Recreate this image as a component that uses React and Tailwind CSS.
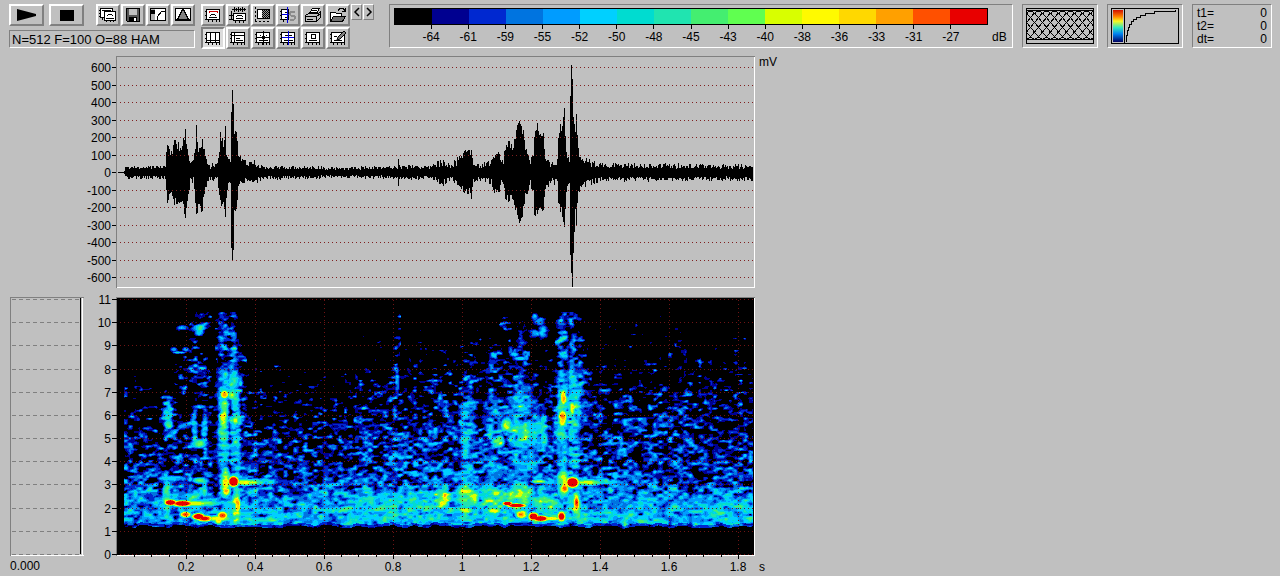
import React from 'react';

const SCALE = [
  '#000000', '#000090', '#0028d0', '#0074e0', '#009cff', '#00d0ff', '#00dcd0', '#20e4b0',
  '#44ee70', '#60ff50', '#d8ff00', '#fffa00', '#ffd800', '#ffa000', '#ff5000', '#e80000',
];
const DB = [-64, -61, -59, -55, -52, -50, -48, -45, -43, -40, -38, -36, -33, -31, -27];

// ---------- signal data ----------

function hash(x, y) {
  let h = Math.imul(x, 374761393) + Math.imul(y, 668265263);
  h = Math.imul(h ^ (h >>> 13), 1274126177);
  return ((h ^ (h >>> 16)) >>> 0) / 4294967295;
}

function noise(x, y, w, h, seed) {
  const gx = x / w;
  const gy = y / h;
  const ix = Math.floor(gx);
  const iy = Math.floor(gy);
  const fx = gx - ix;
  const fy = gy - iy;
  const sx = fx * fx * (3 - 2 * fx);
  const sy = fy * fy * (3 - 2 * fy);
  const a = hash(ix + seed, iy);
  const b = hash(ix + 1 + seed, iy);
  const c = hash(ix + seed, iy + 1);
  const d = hash(ix + 1 + seed, iy + 1);
  return (a + (b - a) * sx) * (1 - sy) + (c + (d - c) * sx) * sy;
}

// amplitude envelope: x, up, down
const ENVELOPE = [
  [124, 1, 1], [125, 5, 5], [150, 5, 5], [165, 5, 5], [166, 20, 18], [167, 30, 34], [170, 20, 22], [172, 22, 22],
  [174, 34, 30], [177, 28, 32], [180, 24, 28], [183, 34, 34], [185, 42, 41], [188, 18, 25], [190, 8, 8], [193, 12, 8],
  [195, 26, 30], [196, 47, 41], [198, 24, 30], [202, 33, 36], [205, 16, 18], [209, 6, 6], [217, 8, 6], [219, 25, 20],
  [220, 36, 32], [223, 28, 28], [225, 46, 44], [226, 18, 30], [228, 15, 10], [230, 10, 10], [231, 60, 75], [232, 82, 87],
  [233, 68, 77], [234, 35, 46], [236, 40, 38], [238, 16, 12], [241, 10, 8], [254, 9, 10], [262, 5, 5], [285, 5, 5],
  [340, 4, 4], [397, 5, 5], [398, 14, 12], [399, 6, 6], [430, 5, 5], [443, 11, 10], [450, 5, 5], [460, 15, 14],
  [465, 20, 20], [470, 20, 18], [471, 24, 26], [473, 8, 8], [480, 6, 6], [490, 10, 10], [494, 18, 18], [499, 20, 20], [501, 8, 8],
  [503, 10, 10], [505, 28, 24], [513, 28, 28], [515, 30, 36], [517, 47, 42], [519, 51, 50], [522, 43, 43], [525, 28, 24],
  [528, 17, 16], [530, 12, 12], [533, 16, 18], [534, 44, 38], [541, 42, 38], [543, 38, 34], [545, 15, 14], [550, 8, 8],
  [557, 10, 10], [558, 42, 34], [562, 46, 44], [564, 64, 54], [566, 20, 20], [569, 12, 8], [570, 76, 82], [571, 107, 100],
  [572, 93, 114], [573, 55, 80], [575, 40, 38], [576, 58, 52], [578, 24, 20], [580, 13, 14], [600, 7, 7], [753, 6, 6],
];

function buildWave() {
  let d = '';
  let k = 0;
  for (let x = 124; x <= 752; x++) {
    while (k < ENVELOPE.length - 2 && ENVELOPE[k + 1][0] <= x) k++;
    const p = ENVELOPE[k];
    const q = ENVELOPE[k + 1];
    const t = (x - p[0]) / (q[0] - p[0]);
    const up = p[1] + (q[1] - p[1]) * t;
    const down = p[2] + (q[2] - p[2]) * t;
    const jitter = up > 45 ? 0 : up > 12 ? 0.35 : 0.8;
    const u = Math.round(up * (1 + (hash(x, 1) - 0.6) * jitter));
    const v = Math.round(down * (1 + (hash(x, 2) - 0.6) * jitter));
    d += `M${x} ${172 - u}h1v${u + v + 1}h-1z`;
  }
  return d;
}

// background level at each kHz, for the three stretches of the recording
const FREQS = [1.25, 2, 2.5, 3, 4, 5, 6, 7, 8, 9, 11];
const FLOOR = [
  [4.5, 4.5, 3.7, 2.8, 1.5, 1, 0.1, -1.2, -2.7, -4.6, -9],
  [5, 5.1, 4.6, 3.4, 2.2, 1.9, 1.1, -0.1, -1.1, -2.3, -6.5],
  [5, 5, 4.2, 3, 1.9, 1.8, 1.1, 0.1, -1, -2.1, -5],
];

function floorLevel(x, f) {
  const row = FLOOR[x < 355 ? 0 : x < 580 ? 1 : 2];
  let i = 0;
  while (i < FREQS.length - 2 && FREQS[i + 1] < f) i++;
  const t = (f - FREQS[i]) / (FREQS[i + 1] - FREQS[i]);
  return row[i] + (row[i + 1] - row[i]) * t;
}

// calls: x, y, half width, half height, level, roughness
const CALLS = [
  // first phrase
  [167, 412, 4, 14, 5.6, 8], [170, 440, 6, 18, 3, 8], [168, 424, 4, 4, 9, 3], [166, 500, 4, 24, 8.6, 7],
  [172, 478, 14, 3, 6, 6], [185, 425, 12, 3, 4, 6], [190, 502, 28, 14, 5.8, 7],
  [170, 502, 6, 3, 18, 0], [182, 503, 10, 3, 18, 0], [195, 503, 14, 3, 11, 1], [209, 503, 12, 3, 8, 3],
  [185, 514, 5, 3, 15, 0], [198, 516, 6, 3, 19, 0], [204, 518, 8, 3, 16, 0], [218, 518, 12, 3, 11.5, 1],
  [222, 515, 5, 4, 15, 0], [218, 520, 4, 4, 12, 1], [200, 480, 7, 3, 8.5, 3],
  [194, 428, 3, 15, 6, 6], [204, 430, 3, 16, 6, 6], [199, 443, 7, 4, 8.5, 3], [199, 406, 6, 2, 4.5, 4],
  [199, 327, 7, 4, 6, 6], [199, 332, 4, 3, 6.5, 3], [198, 366, 7, 8, 2.8, 9], [202, 388, 5, 12, 1, 9], [203, 317, 5, 5, 1.4, 9],
  [194, 345, 4, 6, 1, 9], [184, 375, 6, 18, 0, 9], [204, 492, 3, 14, 6, 5],
  [173, 349, 3, 2, 4.5, 2], [177, 352, 4, 1, 6, 2], [181, 352, 4, 1, 6, 2], [185, 349, 3, 2, 5, 2], [182, 327, 5, 2, 3.5, 4],
  [223, 335, 5, 24, 2.8, 9], [224, 400, 6, 30, 6.4, 7], [223, 450, 6, 50, 5.2, 7], [224, 394, 4, 4, 14, 3], [224, 406, 4, 8, 10, 5],
  [223, 418, 4, 9, 11.5, 5], [223, 434, 5, 10, 8, 5], [225, 483, 5, 15, 11, 5], [226, 491, 4, 4, 13, 2],
  [233, 345, 3, 34, 3.4, 9], [233, 382, 5, 18, 6.4, 6], [235, 420, 5, 40, 7, 7], [235, 460, 5, 40, 5.4, 7], [231, 395, 4, 4, 10, 4],
  [235, 420, 3, 5, 11, 3], [236, 508, 5, 20, 9, 7], [237, 504, 3, 9, 13.5, 3], [238, 402, 7, 34, 2.6, 8],
  [233, 481, 5, 5, 20, 0], [246, 482, 14, 3, 11, 3], [262, 481, 16, 3, 7, 5],
  // soft notes leading to the second phrase
  [397, 382, 2, 12, 3.6, 6], [397, 330, 2, 18, 0.6, 8], [366, 430, 8, 20, 2.2, 9],
  [467, 375, 7, 14, 1.8, 9], [467, 420, 8, 26, 4.8, 7], [467, 460, 8, 50, 4.7, 7], [465, 438, 6, 4, 7.5, 5],
  [495, 375, 9, 18, 1.6, 9], [494, 425, 10, 30, 4.2, 8], [497, 441, 7, 6, 8.5, 6], [494, 475, 9, 20, 4.8, 7],
  [506, 425, 5, 8, 8.5, 6], [508, 400, 8, 22, 3, 8],
  [521, 362, 5, 24, 2.8, 9], [521, 405, 11, 24, 5, 7], [523, 434, 17, 16, 7, 7], [523, 455, 15, 36, 4.6, 7],
  [543, 430, 4, 20, 6.4, 6], [537, 430, 10, 24, 4.6, 7], [505, 330, 4, 8, 0.8, 9],
  [442, 498, 9, 13, 9.2, 8], [467, 496, 12, 13, 9.6, 8], [496, 498, 20, 14, 8.4, 8], [521, 494, 14, 12, 9.6, 8],
  [466, 510, 7, 3, 12, 6], [467, 491, 9, 3, 11.5, 6], [495, 493, 7, 3, 11, 6], [494, 510, 7, 3, 11.5, 6], [545, 502, 20, 12, 7.4, 7],
  [514, 354, 4, 2, 5.5, 2], [520, 358, 6, 2, 6, 2], [526, 357, 2, 3, 5, 2], [510, 350, 2, 3, 4, 2],
  [507, 503, 5, 2, 18, 0], [516, 505, 9, 2, 19, 0], [521, 514, 6, 4, 14, 3],
  [533, 516, 5, 4, 18, 0], [540, 518, 8, 3, 18, 0], [551, 518, 10, 2, 12, 0],
  [542, 331, 4, 5, 6, 3], [535, 333, 5, 3, 5.5, 3], [534, 317, 3, 3, 4.5, 4], [540, 321, 5, 3, 4.5, 4], [538, 481, 7, 2, 11, 3],
  // second phrase
  [561, 516, 4, 5, 17, 0], [563, 345, 5, 36, 3, 9], [563, 400, 6, 30, 7.2, 7], [562, 450, 6, 50, 5, 7],
  [563, 397, 3, 8, 13, 4], [562, 417, 4, 8, 13.5, 4], [561, 434, 5, 8, 8.5, 5], [563, 483, 6, 16, 10.6, 5], [564, 488, 4, 5, 14, 2],
  [572, 345, 3, 34, 3.4, 9], [572, 388, 5, 20, 6.2, 7], [573, 410, 7, 30, 7, 7], [573, 460, 6, 48, 5.4, 7], [572, 408, 3, 7, 11.5, 5],
  [576, 508, 5, 20, 9, 7], [576, 503, 3, 8, 15, 2], [572, 482, 6, 5, 20, 0], [588, 482, 14, 3, 10.6, 3], [604, 481, 16, 3, 7, 5],
  [572, 318, 8, 4, 3, 7], [577, 400, 9, 40, 2.8, 8], [590, 519, 30, 3, 7, 5], [265, 519, 28, 3, 6.6, 5],
];

function levelAt(x, y) {
  const f = (554 - y) / 23.18;
  const edge = 1.2 + (noise(x, 7, 7, 9, 40) - 0.5) * 0.2;
  if (x < 124 || f < edge || f > 10.45) return 0;
  const raw = noise(x, y + x * 0.05, 5, 3, 0) * 0.68 + noise(x, y, 3, 2, 900) * 0.32 - 0.5;
  const n = raw * (1 + 3 * raw * raw);
  const m = noise(x, y, 40, 30, 300) - 0.5;
  let level = floorLevel(x, f) + m * 1.4 + n * (f < 2.6 ? 7 : 8.5);
  level = Math.min(level, f < 3 ? 8 : 5);
  for (const [cx, cy, w, h, amp, rough] of CALLS) {
    const dx = (x - cx) / w;
    const dy = (y - cy) / h;
    const d = dx * dx + dy * dy;
    if (d > 3) continue;
    const v = amp * Math.exp(-0.6 * Math.pow(d, 1.5)) + n * rough;
    if (v > level) level = v;
  }
  if (f < edge + 0.12) level *= 0.5;
  return Math.max(0, Math.min(15, Math.floor(level)));
}

function buildSpectrogram() {
  const paths = SCALE.map(() => '');
  for (let y = 299; y < 555; y++) {
    let start = 118;
    let current = levelAt(118, y);
    for (let x = 119; x <= 753; x++) {
      const level = x === 753 ? -1 : levelAt(x, y);
      if (level !== current) {
        if (current > 0) paths[current] += `M${start} ${y}h${x - start}v1h${start - x}z`;
        start = x;
        current = level;
      }
    }
  }
  return paths;
}

const WAVE = buildWave();
const SPECTRUM = buildSpectrogram();
const MV = [600, 500, 400, 300, 200, 100, 0, -100, -200, -300, -400, -500, -600];
const KHZ = [11, 10, 9, 8, 7, 6, 5, 4, 3, 2, 1, 0];
const SECONDS = ['0.2', '0.4', '0.6', '0.8', '1', '1.2', '1.4', '1.6', '1.8'];
const mvY = (v) => Math.round(172 - v * 0.175) + 0.5;
const khzY = (v) => Math.round(554 - v * 23.18) + 0.5;

// ---------- charts ----------

function Waveform() {
  return (
    <svg viewBox="84 50 700 240" className="block w-full max-w-[700px] text-[12px]" role="img" aria-label="Waveform">
      <g shapeRendering="crispEdges">
        <path d="M116.5 288V56.5H755" stroke="#808080" fill="none" />
        <path d="M117 287.5H754.5V57" stroke="#fff" fill="none" />
        <path d={WAVE} fill="#000" />
        {MV.map((v) => (
          <g key={v}>
            <path d={`M112 ${mvY(v)}h4`} stroke="#000" />
            {v !== 0 && <path d={`M120 ${mvY(v)}H753`} stroke="#802020" strokeDasharray="1 3" />}
          </g>
        ))}
        <path d="M118 172.5H125" stroke="#000" />
      </g>
      {MV.map((v) => (
        <text key={v} x="111" y={mvY(v) + 4.5} textAnchor="end">{v}</text>
      ))}
      <text x="759" y="66">mV</text>
    </svg>
  );
}

function Spectrogram() {
  return (
    <svg viewBox="84 290 700 286" className="block w-full max-w-[700px] text-[12px]" role="img" aria-label="Spectrogram">
      <g shapeRendering="crispEdges">
        <path d="M116.5 556V297.5H755" stroke="#808080" fill="none" />
        <path d="M117 555.5H754.5V298" stroke="#fff" fill="none" />
        <rect x="117" y="298" width="637" height="257" fill="#000" />
        {SPECTRUM.map((d, i) => d && <path key={i} d={d} fill={SCALE[i]} />)}
        {KHZ.map((v) => (
          <g key={v}>
            <path d={`M112 ${khzY(v)}h5`} stroke="#000" />
            <path d={`M120 ${khzY(v)}H753`} stroke="#701414" strokeDasharray="1 3" />
          </g>
        ))}
        {SECONDS.map((s, i) => (
          <g key={s}>
            <path d={`M${186.5 + i * 69} 300V554`} stroke="#701414" strokeDasharray="1 3" />
            <path d={`M${186.5 + i * 69} 555v4`} stroke="#000" />
          </g>
        ))}
        {Array.from({ length: 36 }, (_, i) => (
          <path key={i} d={`M${Math.round(134 + i * 17.25) + 0.5} 555v2`} stroke="#000" />
        ))}
      </g>
      {KHZ.map((v) => (
        <text key={v} x="111" y={khzY(v) + 4.5} textAnchor="end">{v}</text>
      ))}
      {SECONDS.map((s, i) => (
        <text key={s} x={186 + i * 69} y="571" textAnchor="middle">{s}</text>
      ))}
      <text x="759" y="571">s</text>
    </svg>
  );
}

function SpectrumSlice() {
  return (
    <div className="flex flex-col pt-[7px] pl-[10px]">
      <svg viewBox="0 0 74 259" className="block w-[74px] h-[259px]" shapeRendering="crispEdges" role="img" aria-label="Amplitude spectrum">
        <path d="M0.5 259V0.5H74" stroke="#808080" fill="none" />
        <path d="M1 258.5H73.5M72.5 1V258" stroke="#fff" fill="none" />
        <path d="M70.5 1V257" stroke="#000" />
        {KHZ.map((v) => (
          <path key={v} d={`M2 ${khzY(v) - 297}H70`} stroke="#808080" strokeDasharray="4 3" />
        ))}
      </svg>
      <output className="text-[12px] leading-[20px]">0.000</output>
    </div>
  );
}

// ---------- toolbar ----------

function ToolButton({ label, wide, pressed, children }) {
  return (
    <button
      type="button"
      aria-label={label}
      className={
        (wide ? 'w-[35px] ' : 'w-[24px] ') +
        'h-[22px] shrink-0 flex items-center justify-center border-2 ' +
        (pressed
          ? 'bg-[#dcdcdc] border-t-[#808080] border-l-[#808080] border-b-white border-r-white'
          : 'bg-[#c0c0c0] border-t-white border-l-white border-b-[#808080] border-r-[#808080]')
      }
    >
      {children}
    </button>
  );
}

function Icon({ children }) {
  return (
    <svg viewBox="0 0 18 16" width="18" height="16" fill="none" stroke="#000" shapeRendering="crispEdges" className="block shrink-0">
      {children}
    </svg>
  );
}

// small plot with axis ticks on the left and below
function Plot({ children }) {
  return (
    <Icon>
      <path d="M1 4.5h2M1 8.5h2M1 12.5h2M4.5 13v2M8.5 13v2M12.5 13v2M15.5 13v2" />
      <rect x="2.5" y="2.5" width="13" height="10" fill="#fff" />
      {children}
    </Icon>
  );
}

const FILE_TOOLS = [
  ['Copy window', (
    <Icon>
      <path d="M0 3.5h2M0 6.5h2M0 9.5h2" />
      <rect x="1.5" y="1.5" width="12" height="9" fill="#fff" />
      <rect x="5.5" y="4.5" width="11" height="9" fill="#fff" />
      <path d="M3 3.5h9M9 7.5h4M8 8.5h1M13 8.5h1M7 11.5h8M3.5 11v2M7.5 14v1M11.5 14v1M14.5 14v1" />
    </Icon>
  )],
  ['Save', (
    <Icon>
      <path d="M2.5 1.5h13v13h-12l-1-1z" fill="#555" />
      <rect x="5" y="2" width="8" height="6" fill="#c0c0c0" stroke="none" />
      <rect x="5" y="10" width="8" height="5" fill="#000" stroke="none" />
      <rect x="10" y="11" width="2" height="3" fill="#fff" stroke="none" />
    </Icon>
  )],
  ['Gray scale', (
    <Icon>
      <rect x="1.5" y="1.5" width="15" height="12" fill="#fff" />
      <rect x="2" y="2" width="4" height="11" fill="#b0b0b0" stroke="none" />
      <rect x="2" y="3" width="4" height="4" fill="#000" stroke="none" />
      <path d="M8.5 13v-3l1-2 2-2 1-2h4" />
    </Icon>
  )],
  ['Window function', (
    <Icon>
      <rect x="1.5" y="1.5" width="15" height="12" fill="#fff" />
      <path d="M2 12.5l2-1 2-4 2-4 1-1 1 1 2 4 2 4 2 1z" fill="#808080" />
    </Icon>
  )],
];

const VIEW_TOOLS = [
  ['Spectrogram', (
    <Plot>
      <path d="M5 5.5V4.5H13V5.5" stroke="#d00000" />
      <path d="M7 7.5h4M6 8.5h1M11 8.5h1M5 10.5h8" />
    </Plot>
  )],
  ['Waveform and spectrogram', (
    <Icon>
      <path d="M3 2.5h14M5.5 0v5M7.5 1v3M9.5 0v5M11.5 1v3M13.5 0v5M15.5 1v3M0 8.5h4M0 12.5h4M2.5 4v9M6.5 14v2M10.5 14v2M14.5 14v2" />
      <rect x="4.5" y="6.5" width="12" height="7" fill="#fff" />
      <path d="M8 8.5h5M7 9.5h1M13 9.5h1M7 11.5h7" />
    </Icon>
  )],
  ['Select area', (
    <Icon>
      <path d="M1.5 0v15M1 14.5h16" strokeDasharray="2 2" />
      <rect x="3.5" y="2.5" width="12" height="9" fill="#fff" />
      <rect x="8" y="3" width="7" height="8" fill="#999" stroke="none" />
      <path d="M8.5 3v8M10.5 3v8M12.5 3v8M14.5 3v8" strokeDasharray="1 1" />
      <path d="M9.5 4v7M11.5 4v7M13.5 4v7" strokeDasharray="1 1" />
    </Icon>
  )],
  ['Spectrum cursor', (
    <Icon>
      <rect x="2.5" y="2.5" width="7" height="10" fill="#fff" />
      <path d="M1 4.5h2M1 8.5h2M1 12.5h2M4.5 13v2M6 5.5h3M6 10.5h3" />
      <path d="M8.5 0v16M3 7.5h7" stroke="#0000e0" />
      <path d="M16 4.5h-4l-1 1v2l1 1h3l1 1v2l-1 1h-4" stroke="#8a8a8a" strokeWidth="2" />
    </Icon>
  )],
  ['Print', (
    <Icon>
      <path d="M5.5 6.5l3-5h7l-3 5z" fill="#fff" />
      <path d="M1.5 8.5l3-2h10l2-2v6l-4 4h-11z" fill="#c0c0c0" />
      <path d="M1.5 9.5h11v5M12.5 9.5l4-3M3 12.5h6M8 3.5h5M7 5.5h5" />
    </Icon>
  )],
  ['Open', (
    <Icon>
      <path d="M1.5 13.5v-8h5l1 1h5v3" fill="#fff" />
      <path d="M1.5 14.5l3-5h12l-3 5z" fill="#707070" />
      <path d="M9 3.5l2-2h3l2 2M16.5 1v4M13 4.5h4" />
    </Icon>
  )],
];

const GRID_TOOLS = [
  ['Time markers', <Plot><path d="M6.5 3v10M11.5 3v10M3 10.5h12" /></Plot>],
  ['Frequency markers', <Plot><path d="M3 5.5h12M5.5 3v10M7 8.5h4M7 10.5h7" /></Plot>],
  ['Cross hair', <Plot><path d="M9.5 1v14M3 7.5h12M6 5.5h1M12 5.5h1M8 6.5h3M8 8.5h3M5 10.5h9" /></Plot>],
  ['Cross hair with harmonics', (
    <Plot>
      <path d="M6 5.5h7M5 10.5h9" />
      <path d="M9.5 1v14M3 7.5h12" stroke="#0000e0" />
    </Plot>
  )],
  ['Box cursor', <Plot><rect x="7.5" y="4.5" width="4" height="4" /><path d="M5 10.5h8" /></Plot>],
  ['Annotate', (
    <Plot>
      <path d="M8 10l1-3 6-6 2 2-6 6z" fill="#808080" shapeRendering="auto" />
      <path d="M5 6.5h3M5 10.5h8" />
    </Plot>
  )],
];

function Toolbar() {
  return (
    <div className="flex shrink-0 gap-[6px]">
      <div className="flex flex-col gap-[4px]">
        <div className="flex items-start gap-[12px]">
          <div className="flex gap-[5px]">
            <ToolButton label="Play" wide>
              <svg viewBox="0 0 19 12" className="w-[19px] h-[12px]"><path d="M0 0L19 5v2L0 12z" /></svg>
            </ToolButton>
            <ToolButton label="Stop" wide>
              <span className="w-[14px] h-[11px] bg-black" />
            </ToolButton>
          </div>
          <div className="flex gap-px">
            {FILE_TOOLS.map(([label, icon]) => <ToolButton key={label} label={label}>{icon}</ToolButton>)}
          </div>
        </div>
        <input
          readOnly
          aria-label="Analysis settings"
          value="N=512 F=100 O=88 HAM"
          className="w-full h-[18px] px-[2px] text-[13px] leading-[16px] bg-[#c0c0c0] border border-t-[#808080] border-l-[#808080] border-b-white border-r-white rounded-none outline-none"
        />
      </div>
      <div className="flex flex-col gap-px">
        <div className="flex items-start gap-px">
          {VIEW_TOOLS.map(([label, icon]) => <ToolButton key={label} label={label}>{icon}</ToolButton>)}
          {['M6 1L2 5l4 4', 'M2 1l4 4-4 4'].map((d, i) => (
            <button
              key={d}
              type="button"
              aria-label={i ? 'Next' : 'Previous'}
              className="w-[11px] h-[16px] flex items-center justify-center border border-t-white border-l-white border-b-[#808080] border-r-[#808080]"
            >
              <svg viewBox="0 0 8 10" className="w-[8px] h-[10px] shrink-0"><path d={d} fill="none" stroke="#000" strokeWidth="1.5" /></svg>
            </button>
          ))}
        </div>
        <div className="flex gap-px">
          {GRID_TOOLS.map(([label, icon], i) => <ToolButton key={label} label={label} pressed={i === 0}>{icon}</ToolButton>)}
        </div>
      </div>
    </div>
  );
}

function Sunken({ className, children }) {
  return (
    <div className={'h-[44px] border border-t-[#808080] border-l-[#808080] border-b-white border-r-white ' + className}>
      {children}
    </div>
  );
}

function Palette() {
  return (
    <Sunken className="flex-1 min-w-0 flex items-start pt-[3px] pl-[4px] text-[12px]">
      <div className="flex-1 min-w-0">
        <div className="grid grid-cols-16 h-[17px] border border-black">
          {SCALE.map((c) => <span key={c} style={{ backgroundColor: c }} />)}
        </div>
        <div className="flex">
          <span className="w-[3.125%]" />
          {DB.map((v) => (
            <span key={v} className="w-[6.25%] flex flex-col items-center leading-[16px]">
              <span className="w-px h-[4px] bg-black" />
              {v}
            </span>
          ))}
        </div>
      </div>
      <span className="w-[24px] pt-[21px] pl-[4px] leading-[16px]">dB</span>
    </Sunken>
  );
}

function OverlapPreview() {
  return (
    <Sunken className="w-[76px] p-[3px]">
      <svg viewBox="0 0 68 36" className="block w-full h-full" fill="none" stroke="#000" shapeRendering="crispEdges" role="img" aria-label="Window overlap">
        <clipPath id="overlap-clip"><rect x="1" y="1" width="66" height="34" /></clipPath>
        <rect x="0.5" y="0.5" width="67" height="35" />
        <path d="M1 2.5h66" />
        <g clipPath="url(#overlap-clip)">
          {Array.from({ length: 17 }, (_, i) => (
            <path key={i} d={`M${i * 8 - 60} 31.5h4l4-2 20-24 3-2h3l3 2 20 24 4 2h4`} />
          ))}
        </g>
      </svg>
    </Sunken>
  );
}

function TransferCurve() {
  return (
    <Sunken className="w-[76px] p-[3px]">
      <svg viewBox="0 0 68 36" className="block w-full h-full" fill="none" stroke="#000" shapeRendering="crispEdges" role="img" aria-label="Colour transfer curve">
        <defs>
          <linearGradient id="rainbow" x1="0" y1="0" x2="0" y2="1">
            <stop offset="0" stopColor="#d01000" />
            <stop offset="0.2" stopColor="#ff8000" />
            <stop offset="0.35" stopColor="#f8f820" />
            <stop offset="0.55" stopColor="#30e8c0" />
            <stop offset="0.75" stopColor="#0080f0" />
            <stop offset="1" stopColor="#000060" />
          </linearGradient>
        </defs>
        <rect x="0.5" y="0.5" width="67" height="35" />
        <rect x="2" y="2" width="10" height="32" fill="url(#rainbow)" stroke="none" />
        <path d="M13.5 1v34M15.5 34v-7h1v-5h1v-3h1v-3h2v-3h2v-2h3v-2h4v-2h5v-2h9v-2h21v-1" />
      </svg>
    </Sunken>
  );
}

function Cursors() {
  return (
    <Sunken className="w-[80px] px-[4px] pt-[2px] text-[12px] leading-[13px]">
      {['t1=', 't2=', 'dt='].map((name) => (
        <div key={name} className="flex justify-between">
          <span>{name}</span>
          <output>0</output>
        </div>
      ))}
    </Sunken>
  );
}

export default function App() {
  return (
    <div className="min-h-screen w-full bg-[#c0c0c0] text-black font-['Liberation_Sans',sans-serif]">
      <header className="flex items-start pt-[4px] pb-px pl-[9px] pr-[8px]">
        <Toolbar />
        <div className="flex flex-1 min-w-0 gap-[9px] pl-[15px]">
          <Palette />
          <OverlapPreview />
          <TransferCurve />
          <Cursors />
        </div>
      </header>
      <main className="grid grid-cols-[84px_1fr]">
        <div />
        <Waveform />
        <SpectrumSlice />
        <Spectrogram />
      </main>
    </div>
  );
}
